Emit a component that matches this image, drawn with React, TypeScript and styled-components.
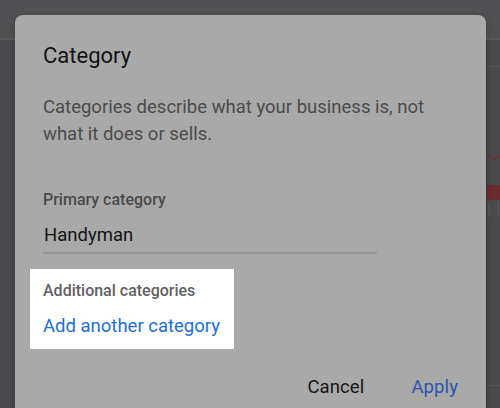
import React from "react";
import styled, { createGlobalStyle } from "styled-components";

const Global = createGlobalStyle`
  html, body { margin: 0; padding: 0; }
  body {
    width: 500px;
    height: 408px;
    overflow: hidden;
    background: #4a4a4c;
    font-family: Roboto, "Liberation Sans", Arial, sans-serif;
  }
`;

const Screen = styled.div`
  position: relative;
  width: 500px;
  height: 408px;
  overflow: hidden;
  background: #4a4a4c;
`;

const PageHeader = styled.div`
  height: 38px;
  background: #515153;
  border-bottom: 2px solid #59595b;
`;

const PageBody = styled.div`
  display: grid;
  grid-template-columns: 486px 1fr;
  height: 368px;
`;

const SideColumn = styled.div`
  display: flex;
  flex-direction: column;
  border-left: 1px solid #3f3f41;
`;

const SideRule = styled.div<{ $h: number }>`
  height: ${(p) => p.$h}px;
  border-bottom: 1px solid #555557;
  flex-shrink: 0;
`;

const Dialog = styled.div`
  position: absolute;
  left: 15px;
  top: 15px;
  width: 471px;
  height: 420px;
  box-sizing: border-box;
  padding: 27px 28px 0 28px;
  background: #a9a9a9;
  border-radius: 8px;
  box-shadow: 0 2px 6px rgba(0, 0, 0, 0.25);
  display: flex;
  flex-direction: column;
`;

const Title = styled.h2`
  margin: 0;
  font-size: 22px;
  line-height: 28px;
  font-weight: 400;
  color: #121212;
`;

const Description = styled.p`
  margin: 24px 0 0 0;
  font-size: 18.5px;
  line-height: 27px;
  color: #4b4b4b;
  width: 400px;
`;

const FieldLabel = styled.div<{ $tone?: string }>`
  font-size: 16px;
  line-height: 20px;
  font-weight: 500;
  color: ${(p) => p.$tone ?? "#4a4a4a"};
`;

const PrimaryBlock = styled.div`
  margin-top: 42px;
  display: flex;
  flex-direction: column;
  gap: 13px;
`;

const InputValue = styled.div`
  width: 334px;
  box-sizing: border-box;
  font-size: 18.5px;
  line-height: 24px;
  color: #141414;
  padding: 0 0 5px 1px;
  border-bottom: 2px solid #979797;
`;

const Highlight = styled.div`
  align-self: flex-start;
  margin: 15px 0 0 -13px;
  padding: 12px 14px 11px 13px;
  background: #ffffff;
  display: flex;
  flex-direction: column;
  gap: 13px;
`;

const LinkText = styled.div`
  font-size: 18.5px;
  line-height: 24px;
  color: #1a6fe0;
`;

const Actions = styled.div`
  margin-top: 26px;
  display: flex;
  justify-content: flex-end;
  gap: 47px;
`;

const ActionButton = styled.span<{ $primary?: boolean }>`
  font-size: 18.5px;
  line-height: 24px;
  letter-spacing: 0.1px;
  color: ${(p) => (p.$primary ? "#2b55ac" : "#161616")};
`;

export default function App() {
  return (
    <Screen>
      <Global />
      <PageHeader />
      <PageBody>
        <div />
        <SideColumn>
          <SideRule $h={26} />
          <svg width="14" height="140" viewBox="0 0 14 140" style={{ display: "block" }}>
            <path d="M0 88 L4 90 L7 93 L10 89 L14 91" stroke="#6e3434" strokeWidth="1.5" fill="none" />
            <rect x="0" y="118" width="14" height="15" fill="#6b2b2d" />
            <line x1="2" y1="136" x2="2" y2="140" stroke="#5d5d5f" strokeWidth="1" />
            <line x1="11" y1="136" x2="11" y2="140" stroke="#5d5d5f" strokeWidth="1" />
          </svg>
          <svg width="14" height="12" viewBox="0 0 14 12" style={{ display: "block" }}>
            <line x1="2" y1="0" x2="2" y2="10" stroke="#5d5d5f" strokeWidth="1" />
            <line x1="11" y1="0" x2="11" y2="10" stroke="#5d5d5f" strokeWidth="1" />
          </svg>
          <SideRule $h={166} />
        </SideColumn>
      </PageBody>
      <Dialog>
        <Title>Category</Title>
        <Description>
          Categories describe what your business is, not what it does or sells.
        </Description>
        <PrimaryBlock>
          <FieldLabel>Primary category</FieldLabel>
          <InputValue>Handyman</InputValue>
        </PrimaryBlock>
        <Highlight>
          <FieldLabel $tone="#5f6164">Additional categories</FieldLabel>
          <LinkText>Add another category</LinkText>
        </Highlight>
        <Actions>
          <ActionButton>Cancel</ActionButton>
          <ActionButton $primary>Apply</ActionButton>
        </Actions>
      </Dialog>
    </Screen>
  );
}
